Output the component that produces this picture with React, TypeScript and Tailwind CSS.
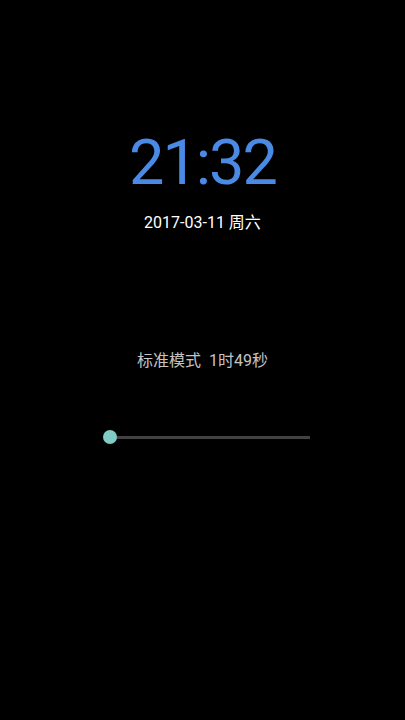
export default function App() {
  return (
    <div className="w-[405px] h-[720px] bg-black flex flex-col items-center" style={{ fontFamily: 'Roboto, "Noto Sans CJK SC", sans-serif' }}>
      <div className="mt-[125px] text-[63px] leading-[76px] font-normal text-[#4a8ae4] tracking-[-2px]">21:32</div>
      <div className="mt-[11px] text-[16px] leading-[22px] text-white">2017-03-11 周六</div>
      <div className="mt-[116px] text-[16px] leading-[22px] text-[#c4c4c4]">标准模式&nbsp;&nbsp;1时49秒</div>
      <div className="mt-[58px] ml-[15px] w-[200px] h-[14px] relative flex items-center">
        <div className="w-[200px] h-[3px] bg-[#424242]" />
        <div className="absolute left-[-7px] top-0 w-[14px] h-[14px] rounded-full bg-[#80cbc4]" />
      </div>
    </div>
  );
}
